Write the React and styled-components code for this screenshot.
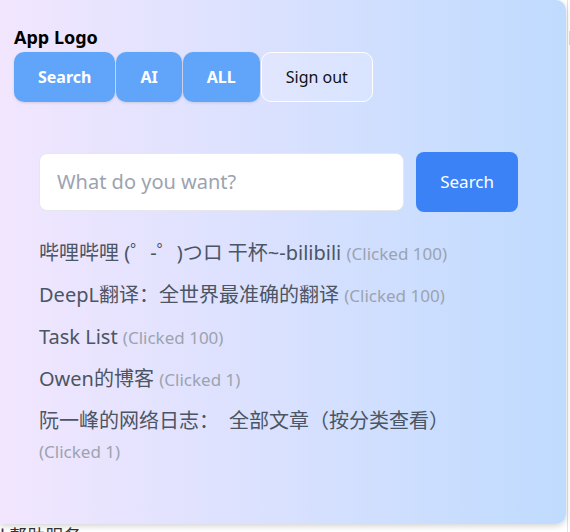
import styled, { createGlobalStyle } from "styled-components";
import { useState } from "react";

const tabs = [
    { id: "search", name: "Search" },
    { id: "ai", name: "AI" },
    { id: "all", name: "ALL" }
]

const links = [
    { name: "哔哩哔哩 (゜-゜)つロ 干杯~-bilibili", clicked: 100 },
    { name: "DeepL翻译：全世界最准确的翻译", clicked: 100 },
    { name: "Task List", clicked: 100 },
    { name: "Owen的博客", clicked: 1 },
    { name: "阮一峰的网络日志：　全部文章（按分类查看）", clicked: 1 }
]

const GlobalStyle = createGlobalStyle`
    body {
        margin: 0;
        overflow: hidden;
        background: #fff;
        font-family: "Noto Sans", "Noto Sans CJK SC", sans-serif;
    }
`

export default function App() {
    const [query, setQuery] = useState("");

    return (
        <Page>
            <GlobalStyle />
            <Behind>
                <BehindMain>
                    <FooterText>l 帮助服务</FooterText>
                </BehindMain>
                <BehindSide>
                    <SideMark>K</SideMark>
                </BehindSide>
            </Behind>

            <Popup>
                <Header>
                    <Logo>App Logo</Logo>
                    <TabRow>
                        {tabs.map(tab => (
                            <TabBtn key={tab.id}>{tab.name}</TabBtn>
                        ))}
                        <SignOut>Sign out</SignOut>
                    </TabRow>
                </Header>

                <Body>
                    <SearchRow>
                        <SearchInput
                            placeholder="What do you want?"
                            value={query}
                            onChange={e => setQuery(e.target.value)}
                        />
                        <SearchBtn>Search</SearchBtn>
                    </SearchRow>

                    <LinkList>
                        {links.map(link => (
                            <LinkItem key={link.name}>
                                {link.name} <Clicked>(Clicked {link.clicked})</Clicked>
                            </LinkItem>
                        ))}
                    </LinkList>
                </Body>
            </Popup>
        </Page>
    );
}

const Page = styled.div`
    position: relative;
    height: 100vh;
`

const Behind = styled.div`
    display: flex;
    height: 100%;
`

const BehindMain = styled.div`
    width: 567px;
    padding-top: 522px;
`

const FooterText = styled.div`
    font-size: 18px;
    color: #333;
    font-family: "Noto Sans CJK SC", sans-serif;
`

const BehindSide = styled.div`
    flex: 1;
    border-left: 1px solid #e2e2e2;
    padding-top: 24px;
    overflow: hidden;
`

const SideMark = styled.div`
    font-size: 20px;
    font-weight: 700;
    color: #b8741a;
`

const Popup = styled.div`
    position: absolute;
    top: 0;
    left: 0;
    width: 566px;
    height: 524px;
    border-radius: 0 10px 10px 0;
    background: linear-gradient(to right, #f2e6fe, #bfdbfe);
    box-shadow: 0 2px 6px rgba(0, 0, 0, 0.18);
    overflow: hidden;
`

const Header = styled.div`
    padding: 27px 14px 0;
`

const Logo = styled.div`
    font-size: 18px;
    font-weight: 700;
    color: #000;
    line-height: 21px;
    margin-bottom: 4px;
`

const TabRow = styled.div`
    display: flex;
    gap: 1px;
`

const TabBtn = styled.button`
    font-family: inherit;
    font-size: 16px;
    font-weight: 700;
    line-height: 22px;
    color: #fff;
    background: #60a5fa;
    border: none;
    border-radius: 10px;
    padding: 14px 24px;
    box-shadow: 0 1px 3px rgba(0, 0, 0, 0.12);
    cursor: pointer;
`

const SignOut = styled.button`
    font-family: inherit;
    font-size: 16px;
    line-height: 22px;
    color: #111;
    background: rgba(255, 255, 255, 0.18);
    border: 1px solid #fff;
    border-radius: 10px;
    padding: 13px 24px;
    cursor: pointer;
`

const Body = styled.div`
    padding: 50px 48px 0 39px;
`

const SearchRow = styled.div`
    display: flex;
    align-items: center;
    gap: 12px;
`

const SearchInput = styled.input`
    flex: 1;
    min-width: 0;
    font-family: inherit;
    font-size: 20px;
    line-height: 26px;
    padding: 15px 17px;
    border: 1px solid #e5e7eb;
    border-radius: 8px;
    background: #fff;
    outline: none;

    &::placeholder {
        color: #9ca3af;
    }
`

const SearchBtn = styled.button`
    font-family: inherit;
    font-size: 17px;
    line-height: 24px;
    color: #fff;
    background: #3b82f6;
    border: none;
    border-radius: 8px;
    padding: 18px 24px;
    cursor: pointer;
`

const LinkList = styled.ul`
    list-style: none;
    margin: 26px 0 0;
    padding: 0;
    display: flex;
    flex-direction: column;
    gap: 12px;
`

const LinkItem = styled.li`
    font-size: 20px;
    line-height: 30px;
    color: #4b5563;
    cursor: pointer;
`

const Clicked = styled.span`
    font-size: 17px;
    line-height: 20px;
    white-space: nowrap;
    color: #9ca3af;
`
